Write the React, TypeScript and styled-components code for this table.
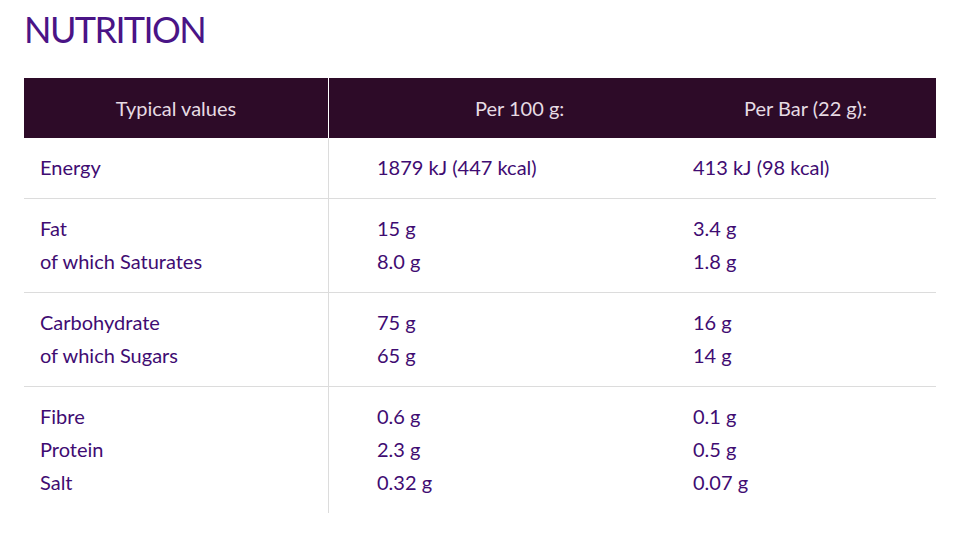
import React from "react";
import styled, { createGlobalStyle } from "styled-components";

const Global = createGlobalStyle`
  html, body { margin: 0; padding: 0; background: #ffffff; }
  body { font-family: Lato, "Open Sans", sans-serif; }
`;

const Page = styled.div`
  padding: 8px 19px 0 24px;
`;

const Title = styled.h2`
  margin: 0;
  font-family: Lato, sans-serif;
  font-weight: 400;
  font-size: 36px;
  line-height: 42px;
  color: #4a1486;
  letter-spacing: -1.6px;
`;

const Table = styled.div`
  margin-top: 28px;
  display: grid;
  grid-template-columns: 305px 348px 1fr;
  width: 912px;
`;

const HeadCell = styled.div<{ $pl?: number; $center?: boolean; $divider?: boolean }>`
  background: #2d0b28;
  height: 60px;
  display: flex;
  align-items: center;
  justify-content: ${(p) => (p.$center ? "center" : "flex-start")};
  padding-left: ${(p) => p.$pl ?? 0}px;
  color: #e6dbe3;
  font-size: 20px;
  border-right: ${(p) => (p.$divider ? "1px solid #ffffff" : "none")};
`;

const Cell = styled.div<{ $pl: number; $divider?: boolean; $last?: boolean }>`
  padding: 13px 0 14px ${(p) => p.$pl}px;
  border-bottom: ${(p) => (p.$last ? "none" : "1px solid #dcdcdc")};
  border-right: ${(p) => (p.$divider ? "1px solid #dcdcdc" : "none")};
  display: flex;
  flex-direction: column;
`;

const Line = styled.div`
  font-size: 20px;
  line-height: 33px;
  color: #3f0c72;
  white-space: nowrap;
`;

const rows: [string, string, string][][] = [
  [["Energy", "1879 kJ (447 kcal)", "413 kJ (98 kcal)"]],
  [
    ["Fat", "15 g", "3.4 g"],
    ["of which Saturates", "8.0 g", "1.8 g"],
  ],
  [
    ["Carbohydrate", "75 g", "16 g"],
    ["of which Sugars", "65 g", "14 g"],
  ],
  [
    ["Fibre", "0.6 g", "0.1 g"],
    ["Protein", "2.3 g", "0.5 g"],
    ["Salt", "0.32 g", "0.07 g"],
  ],
];

export default function App() {
  return (
    <Page>
      <Global />
      <Title>NUTRITION</Title>
      <Table>
        <HeadCell $center $divider>Typical values</HeadCell>
        <HeadCell $pl={146}>Per 100 g:</HeadCell>
        <HeadCell $pl={67}>Per Bar (22 g):</HeadCell>
        {rows.map((group, gi) => {
          const last = gi === rows.length - 1;
          return (
            <React.Fragment key={gi}>
              <Cell $pl={16} $divider $last={last}>
                {group.map((r) => (
                  <Line key={r[0]}>{r[0]}</Line>
                ))}
              </Cell>
              <Cell $pl={48} $last={last}>
                {group.map((r) => (
                  <Line key={r[0]}>{r[1]}</Line>
                ))}
              </Cell>
              <Cell $pl={16} $last={last}>
                {group.map((r) => (
                  <Line key={r[0]}>{r[2]}</Line>
                ))}
              </Cell>
            </React.Fragment>
          );
        })}
      </Table>
    </Page>
  );
}
